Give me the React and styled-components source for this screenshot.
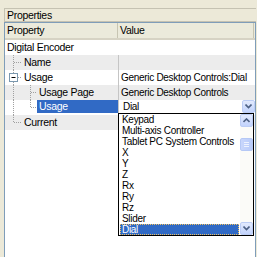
import React from 'react';
import styled, { createGlobalStyle, css } from 'styled-components';

const GlobalStyle = createGlobalStyle`
  html, body {
    margin: 0;
    padding: 0;
    background: #ece9d8;
  }
  body {
    font-family: "Liberation Sans", Arial, sans-serif;
    font-size: 10px;
    letter-spacing: -0.3px;
    color: #000;
  }
`;

const rows = [
  { kind: 'category', label: 'Digital Encoder' },
  { label: 'Name', grey: true, lines: [['pass', 'branch']] },
  { label: 'Usage', expander: true, value: 'Generic Desktop Controls:Dial', lines: [['pass', 'branch']] },
  { label: 'Usage Page', grey: true, value: 'Generic Desktop Controls', lines: [['pass', 'none'], ['pass', 'branch']] },
  { label: 'Usage', selected: true, combo: 'Dial', lines: [['pass', 'none'], ['end', 'branch']] },
  { label: 'Current', grey: true, lines: [['end', 'branch']] },
];

const options = [
  'Keypad',
  'Multi-axis Controller',
  'Tablet PC System Controls',
  'X',
  'Y',
  'Z',
  'Rx',
  'Ry',
  'Rz',
  'Slider',
  'Dial',
];

// tree connector for one indent step
const Connector = ({ width, vertical, branch, expander }) => (
  <svg width={width} height="15" viewBox={`0 0 ${width} 15`}>
    {vertical === 'pass' && (
      <line x1="8.5" y1="0" x2="8.5" y2="15" stroke="#a0a0a0" strokeDasharray="1 1" />
    )}
    {vertical === 'end' && (
      <line x1="8.5" y1="0" x2="8.5" y2="7.5" stroke="#a0a0a0" strokeDasharray="1 1" />
    )}
    {branch === 'branch' && (
      <line x1="9" y1="7.5" x2={width - 1} y2="7.5" stroke="#a0a0a0" strokeDasharray="1 1" />
    )}
    {expander && (
      <g>
        <rect x="4.5" y="3.5" width="8" height="8" fill="#fff" stroke="#7a98af" />
        <line x1="6.5" y1="7.5" x2="10.5" y2="7.5" stroke="#000" />
      </g>
    )}
  </svg>
);

const ChevronDown = () => (
  <svg width="7" height="5" viewBox="0 0 7 5">
    <path d="M0.5 0.5 L3.5 3.5 L6.5 0.5" fill="none" stroke="#4d6185" strokeWidth="1.6" />
  </svg>
);

const ChevronUp = () => (
  <svg width="7" height="5" viewBox="0 0 7 5">
    <path d="M0.5 4 L3.5 1 L6.5 4" fill="none" stroke="#4d6185" strokeWidth="1.6" />
  </svg>
);

const App = () => {
  return (
    <Page>
      <GlobalStyle />
      <TitleBar>Properties</TitleBar>
      <Grid>
        <Header>
          <HeaderCell $width={113}>Property</HeaderCell>
          <HeaderCell>Value</HeaderCell>
          <HeaderEnd />
        </Header>
        {rows.map((row, idx) =>
          row.kind === 'category' ? (
            <CategoryRow key={idx}>{row.label}</CategoryRow>
          ) : (
            <Row key={idx} $grey={row.grey}>
              <NameCell>
                <Indent>
                  {row.lines.map((l, i) => (
                    <Connector
                      key={i}
                      width={i === 0 ? 17 : 15}
                      vertical={l[0]}
                      branch={l[1]}
                      expander={row.expander && i === row.lines.length - 1}
                    />
                  ))}
                </Indent>
                <NameText $selected={row.selected}>{row.label}</NameText>
              </NameCell>
              <ValueCell>
                {row.combo ? (
                  <Combo>
                    <ComboText>{row.combo}</ComboText>
                    <XPButton>
                      <ChevronDown />
                    </XPButton>
                  </Combo>
                ) : (
                  row.value
                )}
              </ValueCell>
            </Row>
          )
        )}
        <DropList>
          <Items>
            {options.map((o) => (
              <Item key={o} $active={o === 'Dial'}>
                {o}
              </Item>
            ))}
          </Items>
          <ScrollBar>
            <XPButton>
              <ChevronUp />
            </XPButton>
            <Track>
              <Thumb>
                <Grip />
                <Grip />
                <Grip />
              </Thumb>
            </Track>
            <XPButton>
              <ChevronDown />
            </XPButton>
          </ScrollBar>
        </DropList>
      </Grid>
    </Page>
  );
};

const Page = styled.div`
  width: 257px;
  height: 257px;
  overflow: hidden;
  background: #ece9d8;
  display: flex;
  flex-direction: column;
  padding: 8px 1px 0 4px;
  box-sizing: border-box;
`;

const TitleBar = styled.div`
  height: 14px;
  line-height: 13px;
  box-sizing: border-box;
  border: 1px solid #c5c2b2;
  border-right: none;
  padding-left: 2px;
  font-size: 10.5px;
  background: #ece9d8;
`;

const Grid = styled.div`
  position: relative;
  flex: 1;
  background: #fff;
  border: 1px solid #7f9db9;
  border-bottom: none;
`;

const Header = styled.div`
  display: flex;
  height: 17px;
  background: #ebeadb;
  border-bottom: 2px solid #d6d3c4;
  box-sizing: border-box;
`;

const HeaderCell = styled.div`
  ${({ $width }) =>
    $width
      ? css`
          width: ${$width}px;
        `
      : css`
          flex: 1;
        `}
  border-right: 1px solid #c7c5b2;
  padding-left: 2px;
  line-height: 15px;
  font-size: 10.5px;
  box-sizing: border-box;
`;

const HeaderEnd = styled.div`
  width: 1px;
`;

const CategoryRow = styled.div`
  height: 15px;
  line-height: 15px;
  padding-left: 2px;
  font-size: 10.5px;
`;

const Row = styled.div`
  display: flex;
  height: 15px;
  background: ${({ $grey }) => ($grey ? '#ececec' : '#fff')};
`;

const NameCell = styled.div`
  width: 113px;
  display: flex;
  align-items: stretch;
  border-right: 1px solid #c5c5c5;
`;

const Indent = styled.div`
  display: flex;
`;

const NameText = styled.div`
  flex: 1;
  line-height: 15px;
  padding-left: 2px;
  font-size: 10.5px;
  ${({ $selected }) =>
    $selected &&
    css`
      background: #316ac5;
      color: #fff;
      height: 13px;
      line-height: 13px;
    `}
`;

const ValueCell = styled.div`
  flex: 1;
  min-width: 0;
  line-height: 15px;
  padding-left: 2px;
  white-space: nowrap;
  overflow: hidden;
`;

const Combo = styled.div`
  display: flex;
  height: 13px;
  margin-left: -2px;
  background: #fff;
`;

const ComboText = styled.div`
  flex: 1;
  line-height: 13px;
  padding-left: 4px;
`;

const XPButton = styled.div`
  width: 13px;
  height: 13px;
  flex: none;
  box-sizing: border-box;
  display: flex;
  align-items: center;
  justify-content: center;
  border: 1px solid #bccdf5;
  border-radius: 2px;
  background: linear-gradient(#e2eafd, #c2d3fc);
`;

const DropList = styled.div`
  position: absolute;
  left: 113px;
  top: 90px;
  width: 136px;
  box-sizing: border-box;
  border: 1px solid #000;
  background: #fff;
  display: flex;
`;

const Items = styled.div`
  flex: 1;
  min-width: 0;
  overflow: hidden;
  padding: 0 1px;
`;

const Item = styled.div`
  height: 11px;
  line-height: 11px;
  padding-left: 2px;
  white-space: nowrap;
  ${({ $active }) =>
    $active &&
    css`
      background: #316ac5;
      color: #fff;
      outline: 1px dotted #f0c060;
      outline-offset: -1px;
    `}
`;

const ScrollBar = styled.div`
  width: 13px;
  flex: none;
  display: flex;
  flex-direction: column;
  background: #fbfbf8;
`;

const Track = styled.div`
  flex: 1;
  padding-top: 11px;
`;

const Thumb = styled.div`
  height: 13px;
  box-sizing: border-box;
  border: 1px solid #b5c8f5;
  border-radius: 2px;
  background: linear-gradient(90deg, #c9d7fc, #b8cbf9);
  display: flex;
  flex-direction: column;
  align-items: center;
  justify-content: center;
  gap: 1px;
`;

const Grip = styled.div`
  width: 5px;
  height: 1px;
  background: #eef3fe;
`;

export default App;
